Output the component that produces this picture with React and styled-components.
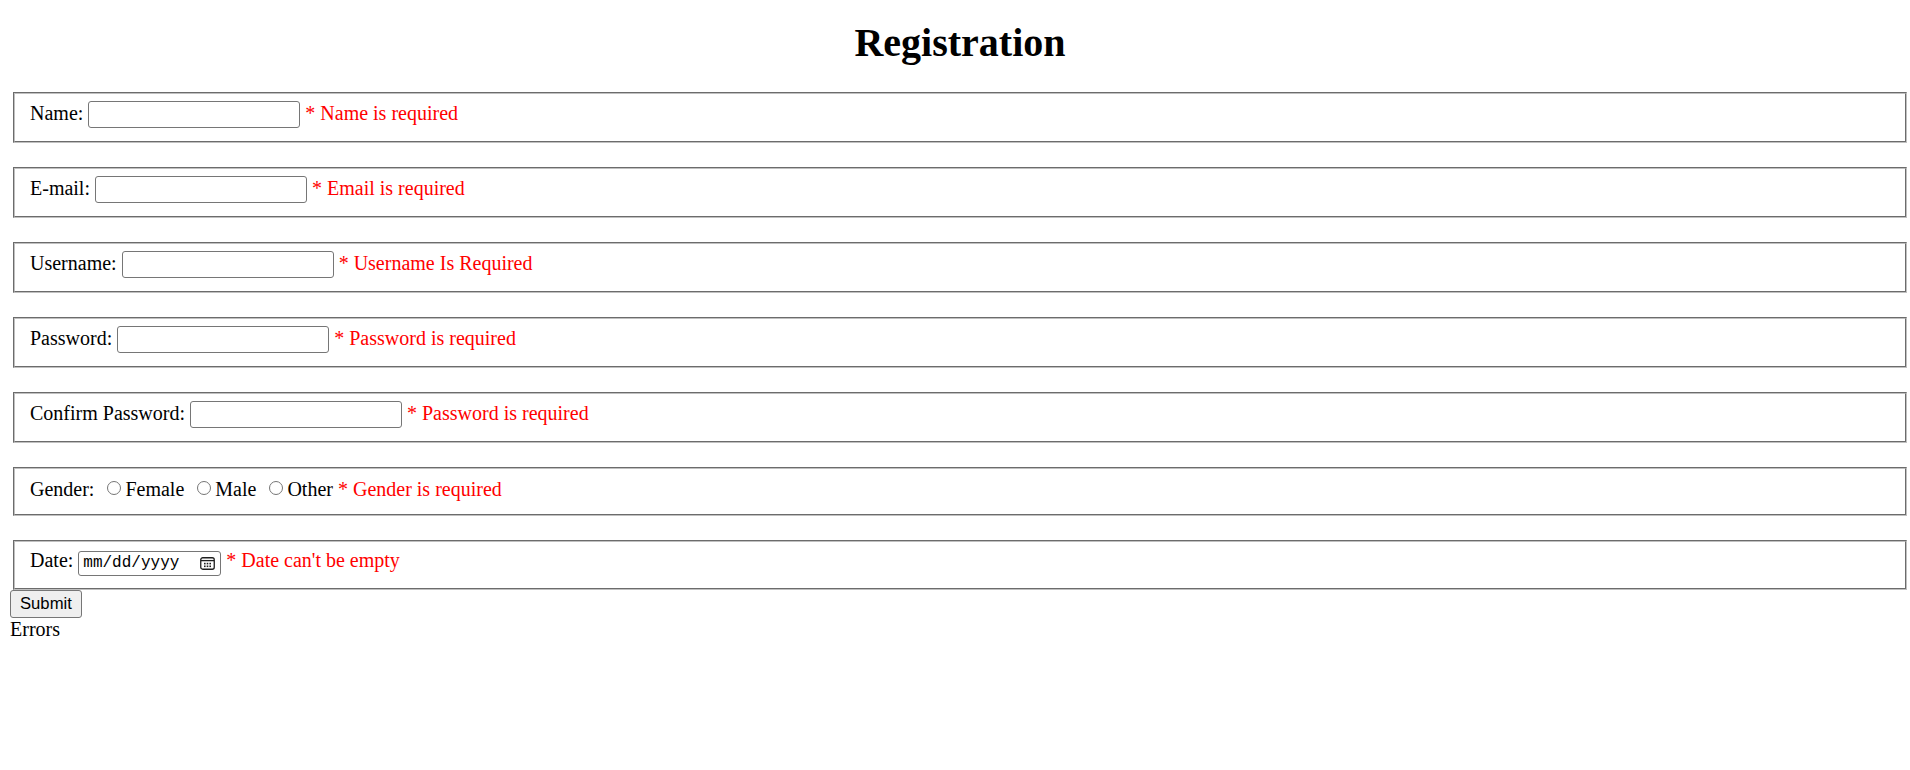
import React from "react";
import styled, { createGlobalStyle } from "styled-components";

const GlobalStyle = createGlobalStyle`
  html, body {
    margin: 0;
    padding: 0;
    background: #ffffff;
  }
  body {
    font-family: "Liberation Serif", "Times New Roman", serif;
    font-size: 20px;
    line-height: 23px;
    color: #000000;
  }
`;

const Page = styled.div`
  padding: 19.6px 0 0 10px;
`;

const Title = styled.h1`
  margin: 0 0 26.7px;
  font-size: 40px;
  line-height: 46px;
  font-weight: bold;
  text-align: center;
`;

const Form = styled.form``;

const Fieldset = styled.fieldset`
  margin: 0 3px ${(p) => (p.$last ? "0" : "24.5px")} 3px;
  padding: 7px 15px 12.5px;
  border: 2px groove #c0c0c0;
  line-height: 23px;
  min-width: 0;
`;

const FieldLabel = styled.label``;

const TextInput = styled.input`
  box-sizing: border-box;
  width: 212px;
  height: 27px;
  margin: 0;
  padding: 1px 3px;
  border: 1px solid #767676;
  border-radius: 3px;
  background: #ffffff;
  font: 16.67px "Liberation Sans", Arial, sans-serif;
  vertical-align: baseline;
`;

const Radio = styled.input.attrs({ type: "radio" })`
  appearance: none;
  -webkit-appearance: none;
  box-sizing: border-box;
  width: 14px;
  height: 14px;
  margin: 4.75px 4.75px 1px 7.25px;
  border: 1px solid #767676;
  border-radius: 50%;
  background: #ffffff;
  vertical-align: baseline;
`;

const ErrorText = styled.span`
  color: #ff0000;
`;

const DateBox = styled.span`
  box-sizing: border-box;
  display: inline-flex;
  align-items: center;
  justify-content: space-between;
  width: 143px;
  height: 25px;
  padding: 0 5px 0 4px;
  border: 1px solid #767676;
  border-radius: 3px;
  background: #ffffff;
  vertical-align: baseline;
`;

const DateText = styled.span`
  font-family: "Liberation Mono", "Courier New", monospace;
  font-size: 16px;
  line-height: 18px;
  color: #000000;
`;

const CalendarIcon = styled.svg`
  display: block;
  width: 15px;
  height: 13px;
`;

const SubmitButton = styled.button`
  display: block;
  box-sizing: border-box;
  height: 27.6px;
  margin: 0;
  padding: 0 9px;
  border: 1px solid #767676;
  border-radius: 3px;
  background: #efefef;
  color: #000000;
  font: 16.67px "Liberation Sans", Arial, sans-serif;
`;

const Errors = styled.div`
  line-height: 23px;
`;

const fields = [
  { label: "Name:", error: "* Name is required" },
  { label: "E-mail:", error: "* Email is required" },
  { label: "Username:", error: "* Username Is Required" },
  { label: "Password:", error: "* Password is required", type: "password" },
  { label: "Confirm Password:", error: "* Password is required", type: "password" },
];

export default function App() {
  return (
    <>
      <GlobalStyle />
      <Page>
        <Title>Registration</Title>
        <Form onSubmit={(e) => e.preventDefault()}>
          {fields.map((f) => (
            <Fieldset key={f.label}>
              <FieldLabel>{f.label}</FieldLabel>{" "}
              <TextInput type={f.type || "text"} />{" "}
              <ErrorText>{f.error}</ErrorText>
            </Fieldset>
          ))}
          <Fieldset>
            <FieldLabel>Gender:</FieldLabel>{" "}
            <Radio name="gender" />Female{" "}
            <Radio name="gender" />Male{" "}
            <Radio name="gender" />Other{" "}
            <ErrorText>* Gender is required</ErrorText>
          </Fieldset>
          <Fieldset $last>
            <FieldLabel>Date:</FieldLabel>{" "}
            <DateBox>
              <DateText>mm/dd/yyyy</DateText>
              <CalendarIcon viewBox="0 0 15 13" fill="none">
                <rect x="0.75" y="0.75" width="13.5" height="11.5" rx="2" stroke="#1f1f1f" strokeWidth="1.3" />
                <line x1="1" y1="3.6" x2="14" y2="3.6" stroke="#1f1f1f" strokeWidth="1.3" />
                <rect x="4" y="5.8" width="1.6" height="1.6" fill="#1f1f1f" />
                <rect x="6.7" y="5.8" width="1.6" height="1.6" fill="#1f1f1f" />
                <rect x="9.4" y="5.8" width="1.6" height="1.6" fill="#1f1f1f" />
                <rect x="4" y="8.5" width="1.6" height="1.6" fill="#1f1f1f" />
                <rect x="6.7" y="8.5" width="1.6" height="1.6" fill="#1f1f1f" />
                <rect x="9.4" y="8.5" width="1.6" height="1.6" fill="#1f1f1f" />
              </CalendarIcon>
            </DateBox>{" "}
            <ErrorText>* Date can't be empty</ErrorText>
          </Fieldset>
          <SubmitButton type="submit">Submit</SubmitButton>
          <Errors>Errors</Errors>
        </Form>
      </Page>
    </>
  );
}
